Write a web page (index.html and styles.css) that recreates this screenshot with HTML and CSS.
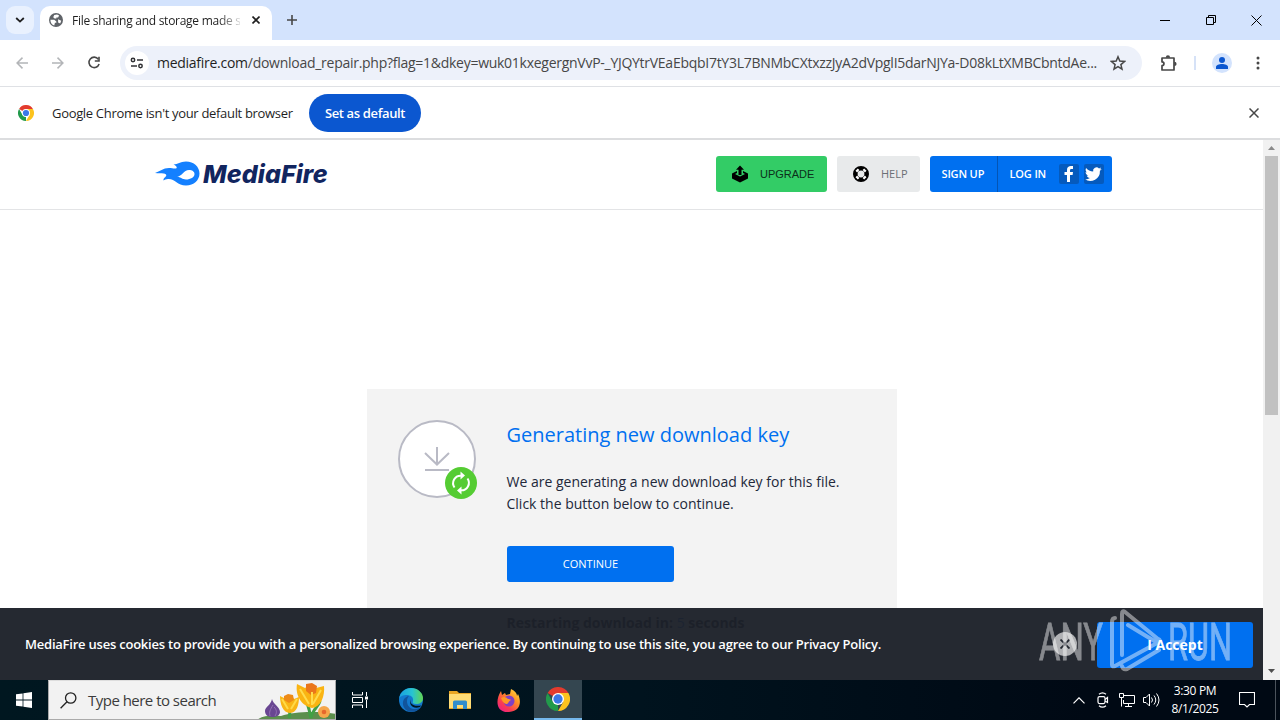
FILE: index.html
```html
<!DOCTYPE html>
<html lang="en">
<head>
    <meta charset="UTF-8">
    <title>File sharing and storage made simple</title>
    <link rel="stylesheet" href="styles.css">
</head>
<body>
    <div class="tabstrip">
        <button class="tab-search"><svg width="10" height="6" viewBox="0 0 10 6"><path d="M1.2 1L5 4.6 8.8 1" fill="none" stroke="#1f1f1f" stroke-width="1.8"/></svg></button>
        <div class="tab">
            <svg width="14" height="14" viewBox="2 2 20 20"><circle cx="12" cy="12" r="10" fill="#5f6368"/><path fill="#fff" d="M4 11.500h5.500l3 2.500v2h-2l-1 3.800C6 19 4 15.500 4 11.500zM9.500 5l4-1 3 1.500-1.500 3h-2.500V10H10L8 8zM15 11l4.500 2-1.500 4-3-1.500v-2z"/></svg>
            <span class="tab-title">File sharing and storage made s</span>
            <svg class="tab-close" width="8" height="8" viewBox="0 0 8 8"><path d="M.5.5l7 7m0-7l-7 7" stroke="#1f1f1f" stroke-width="1.600"/></svg>
        </div>
        <svg class="new-tab" width="10" height="10" viewBox="0 0 10 10"><path d="M5 0v10M0 5h10" stroke="#474747" stroke-width="1.600"/></svg>
        <div class="window-buttons">
            <svg width="10" height="10" viewBox="0 0 10 10"><path d="M0 5.500h10" stroke="#000"/></svg>
            <svg width="10" height="10" viewBox="0 0 10 10"><path d="M.5 2.500h7v7h-7zM2.500 2.500v-2h7v7h-2" fill="none" stroke="#000"/></svg>
            <svg width="11" height="11" viewBox="0 0 11 11"><path d="M.5.5l10 10m0-10l-10 10" stroke="#000"/></svg>
        </div>
    </div>

    <div class="toolbar">
        <svg class="nav-icon" width="12" height="12" viewBox="0 0 12 12"><path d="M6.500.6L1.100 6l5.400 5.400M1.100 6H12" fill="none" stroke="#b3b5b8" stroke-width="1.500"/></svg>
        <svg class="nav-icon" width="12" height="12" viewBox="0 0 12 12"><path d="M5.500.6L10.900 6l-5.400 5.400M10.900 6H0" fill="none" stroke="#b3b5b8" stroke-width="1.500"/></svg>
        <svg class="nav-icon" width="14" height="14" viewBox="0 0 14 14"><path d="M11.300 3.200A5.200 5.200 0 1 0 12.100 8" fill="none" stroke="#474747" stroke-width="1.600"/><path d="M12.800.8v5H7.800V4.200h3.400V.8z" fill="#474747"/></svg>
        <div class="omnibox">
            <span class="site-info"><svg width="14" height="12" viewBox="0 0 14 12"><g fill="none" stroke="#303134" stroke-width="1.500"><circle cx="3" cy="3" r="1.700"/><circle cx="10.500" cy="9" r="1.700"/><path d="M7 3h6M1 9h6"/></g></svg></span>
            <span class="url"><b>mediafire.com</b>/download_repair.php?flag=1&amp;dkey=wuk01kxegergnVvP-_YJQYtrVEaEbqbI7tY3L7BNMbCXtxzzJyA2dVpglI5darNJYa-D08kLtXMBCbntdAe...</span>
            <svg class="star" width="16" height="16" viewBox="0 0 16 16"><path d="M8 1.800l1.800 4.300 4.700.4-3.600 3.100 1.100 4.600L8 11.700l-4 2.500 1.100-4.600-3.600-3.100 4.700-.4z" fill="none" stroke="#474747" stroke-width="1.500"/></svg>
        </div>
        <svg class="extensions" width="18" height="18" viewBox="0 0 18 18"><path d="M2 4H14v4.200V16H2v-4.300c2.600-.2 2.600-3.600 0-3.800z" fill="none" stroke="#474747" stroke-width="1.700" stroke-linejoin="round"/><path d="M5.800 3.700a2.100 2.400 0 0 1 4.300 0zM14.300 7.800a2.300 2.100 0 0 1 0 4.200z" fill="#474747"/></svg>
        <span class="divider"></span>
        <span class="profile"><svg width="12" height="12" viewBox="0 0 12 12" fill="#0b57d0"><circle cx="6" cy="3" r="3"/><path d="M0 12V10c0-4 12-4 12 0v2z"/></svg></span>
        <svg class="menu-dots" width="4" height="14" viewBox="0 0 4 14" fill="#474747"><circle cx="2" cy="2" r="1.500"/><circle cx="2" cy="7" r="1.500"/><circle cx="2" cy="12" r="1.500"/></svg>
    </div>

    <div class="infobar">
        <svg width="16" height="16" viewBox="0 0 48 48"><use href="#chrome"/></svg>
        <span class="infobar-text">Google Chrome isn't your default browser</span>
        <button class="set-default">Set as default</button>
        <svg class="infobar-close" width="10" height="10" viewBox="0 0 10 10"><path d="M.5.5l9 9m0-9l-9 9" stroke="#474747" stroke-width="1.500"/></svg>
    </div>

    <div class="viewport">
        <div class="page">
            <div class="site-header">
                <a class="logo">
                    <svg width="46" height="26" viewBox="0 0 46 26"><path fill="#1480ff" fill-rule="evenodd" d="M0 12C5 10.500 8 7 14 7c3 0 5 .8 7.500.3C22.500 6 20.500 4.200 18.500 3.500 23 3.500 25 .5 31 .5c8 0 13.500 5.500 13.500 12S39 24.500 31 24.500c-9 0-11-7-18-6.500-2 0-3.500 1-4.500 1.500C8 16.500 12.500 15.500 11 13.500 9.500 11.500 5 12.500 0 12zM21.500 16.200C26 15.500 26.500 18.500 31 18.500c4.500 0 8.500-2.300 8.500-5.500 0-2.500-2.500-4-5.500-4-5.500 0-6.500 6-12.500 7.200z"/></svg>
                    <span>MediaFire</span>
                </a>
                <a class="btn upgrade">
                    <svg width="18" height="18" viewBox="0 0 18 18"><path d="M9 .5l4 4.300h-2.500V10h-3V4.800H5zM6 6L1 8.500v5l8 4 8-4v-5L12 6v2l2 1L9 11.500 4 9l2-1z"/></svg>
                    <span>UPGRADE</span>
                </a>
                <a class="btn help">
                    <svg width="18" height="18" viewBox="0 0 18 18"><circle cx="9" cy="9" r="5.700" fill="none" stroke="#000" stroke-width="4.600"/><path d="M4.300 6.600l2.300-2.300M11.400 4.300l2.300 2.300M13.700 11.400l-2.300 2.300M6.600 13.700l-2.300-2.300" stroke="#fff" stroke-width="2.200"/></svg>
                    <span>HELP</span>
                </a>
                <div class="account">
                    <a class="signup">SIGN UP</a>
                    <a class="login">LOG IN</a>
                    <span class="social"><svg width="20" height="20" viewBox="0 0 20 20"><path fill="#fff" d="M8 18v-7H5.500V8H8V6c0-3 1.700-4 4-4h2v3h-1.500C11.300 5 11 5.500 11 6.500V8h3l-.4 3H11v7z"/></svg></span>
                    <span class="social"><svg width="20" height="20" viewBox="1 0 24 24"><path fill="#fff" d="M22.200 5.900c-.8.300-1.600.6-2.400.7.900-.5 1.500-1.300 1.800-2.300-.8.500-1.700.8-2.600 1A4.100 4.100 0 0 0 12 9c-3.400-.2-6.400-1.800-8.500-4.300-1.100 2-.5 4.300 1.300 5.500-.7 0-1.300-.2-1.900-.5 0 2 1.400 3.700 3.300 4.100-.6.200-1.200.2-1.900.1.500 1.600 2 2.800 3.800 2.800A8.300 8.300 0 0 1 2 18.400 11.700 11.700 0 0 0 20.100 8c.8-.6 1.500-1.300 2.100-2.100z"/></svg></span>
                </div>
            </div>

            <div class="card">
                <svg class="card-icon" width="80" height="80" viewBox="0 0 80 80">
                    <circle cx="39" cy="39" r="38" fill="#fff" stroke="#b9bac5" stroke-width="2"/>
                    <path d="M39 27v17M27 33l12 11.500L51 33M27 50h24" fill="none" stroke="#b9bac5" stroke-width="2"/>
                    <circle cx="63" cy="63" r="16" fill="#5c3"/>
                    <path d="M56.500 67.500A7.500 7.500 0 0 1 63 55.700M69.500 58.500A7.500 7.500 0 0 1 63 70.300" fill="none" stroke="#fff" stroke-width="2"/>
                    <path d="M62.500 51.500l4.500 4-4.500 4zM63.500 66.500l-4.500 4 4.500 4z" fill="#fff"/>
                </svg>
                <div class="card-body">
                    <h1>Generating new download key</h1>
                    <p>We are generating a new download key for this file.<br>Click the button below to continue.</p>
                    <button class="continue">CONTINUE</button>
                    <div class="countdown">Restarting download in: <span>5</span> seconds</div>
                </div>
            </div>

            <div class="cookie-bar">
                <span class="cookie-text">MediaFire uses cookies to provide you with a personalized browsing experience. By continuing to use this site, you agree to our Privacy Policy.</span>
                <span class="cookie-close"><svg width="10" height="10" viewBox="0 0 10 10"><path d="M.5.5l9 9m0-9l-9 9" stroke="#22262f" stroke-width="1.800"/></svg></span>
                <button class="accept">I Accept</button>
            </div>
        </div>
        <div class="scrollbar">
            <svg width="7" height="4" viewBox="0 0 7 4"><path d="M0 4L3.500 0 7 4z" fill="#8a8a8a"/></svg>
            <div class="thumb"></div>
            <svg width="7" height="4" viewBox="0 0 7 4"><path d="M0 0l3.500 4L7 0z" fill="#505050"/></svg>
        </div>
    </div>

    <div class="taskbar">
        <div class="start"><svg width="16" height="16" viewBox="0 0 16 16" fill="#fff"><path d="M0 2.300l6.600-.9v6.200H0zM7.400 1.300L16 0v7.600H7.400zM0 8.400h6.600v6.200L0 13.700zM7.400 8.400H16V16l-8.600-1.300z"/></svg></div>
        <div class="search">
            <svg width="17" height="17" viewBox="0 0 17 17"><g fill="none" stroke="#222" stroke-width="1.300"><circle cx="10.700" cy="6" r="5.200"/><path d="M7 9.700L.6 16.200"/></g></svg>
            <span>Type here to search</span>
            <svg class="flowers" width="80" height="39" viewBox="0 0 80 39">
                <path d="M0 39c6-5 16-5 24-4 14-5 38-5 56-2v6z" fill="#5c8f4d"/>
                <path d="M32 37c2-8 0-9-4-13M54 37c-3-8 0-10-6-17M54 37c1-8 8-12 9-17" fill="none" stroke="#42a045" stroke-width="3"/>
                <path d="M15 18c1 5 8 8 8 13 0 3-3 5-8 5s-7-3-7-6c0-4 6-6 7-12z" fill="#694692"/><path d="M16 24c-3 5-4 7-3 11M17 26c3 3 3 6 1 9" fill="none" stroke="#9471b5"/>
                <path d="M23 15l6 3 4-4 4 4 5-2c0 7-2 16-9 16s-10-9-10-17z" fill="#f9b516"/>
                <path d="M27 15l4-2 5 1 1 5-5 3-5-3z" fill="#ed8a17"/><path d="M25 18l6 10M40 18l-6 10" stroke="#ffda48" stroke-width="2"/>
                <path d="M40 3l8 4 6-4 5 4 8-2c1 10-3 21-12 22C45 25 38 15 40 3z" fill="#fab413"/>
                <path d="M49 3l6-1 5 3-1 7-5 2-5-4z" fill="#ea761b"/><path d="M43 8l9 15M64 9l-8 14M55 11v13" stroke="#ffdc4d" stroke-width="2"/>
                <circle cx="67" cy="31" r="6" fill="#f5a64b"/><circle cx="67" cy="31" r="2.300" fill="#e5672c"/>
            </svg>
        </div>
        <div class="task"><svg width="17" height="16" viewBox="0 0 17 16"><path d="M.5 0v3h10V0M.5 16v-3h10v3M.5 5.500h10v5H.5zM14.500 0v4M14.500 8v8" fill="none" stroke="#fff"/><path d="M13 4.500h3v3h-3z" fill="#fff"/></svg></div>
        <div class="task edge">
            <svg width="26" height="26" viewBox="0 0 26 26">
                <defs><linearGradient id="edgeTop" x1="0" x2="1"><stop stop-color="#199fe0"/><stop offset=".55" stop-color="#27c3d3"/><stop offset="1" stop-color="#62d551"/></linearGradient></defs>
                <circle cx="13" cy="13" r="12" fill="#1379ce"/>
                <path d="M1 12C2 5 7 1 13 1c7 0 12 5 12 10 0 4-3 6-7 6-3 0-4-1-3-3 1-4-3-6-6-6-4 0-7 1-8 4z" fill="url(#edgeTop)"/>
                <path d="M11 9c-4 4-2 13 6 13 3 0 5-1 7-3-4 6-12 8-17 3C3 17 5 10 11 9z" fill="#11549c"/><path d="M13 12c-2 4 2 8 10 6.500l-1 1.500c-7 3-12-3-9-8z" fill="#001722"/>
            </svg>
        </div>
        <div class="task"><svg width="22" height="20" viewBox="0 0 22 20"><path d="M0 1h8l2 2h12v16H0z" fill="#e9a624"/><path d="M0 4h22v14H0z" fill="#ffdc75"/><path d="M4 19v-7q0-1.500 1.500-1.500h11q1.500 0 1.500 1.500v7h-4v-4H8v4z" fill="#318dcc"/></svg></div>
        <div class="task">
            <svg width="24" height="25" viewBox="0 0 24 25">
                <defs><linearGradient id="foxFire" x1="1" x2=".2" y2="1"><stop stop-color="#ffe546"/><stop offset=".4" stop-color="#ff9425"/><stop offset=".75" stop-color="#fa3d50"/><stop offset="1" stop-color="#ed2085"/></linearGradient></defs>
                <path d="M4 3l1 4 3-2 1 2 4-1 1-5c4 2 6 4 6 7l1-2c3 6 4 17-9 18C-1 25-2 12 4 3z" fill="url(#foxFire)"/>
                <circle cx="12" cy="13" r="5.500" fill="#8040c5"/><path d="M4 10c3-2 5-1 7 1 2 0 3 1 3 1-3 1-2 4-5 4-3-1-4-4-5-6z" fill="#ff9824"/>
            </svg>
        </div>
        <div class="task active">
            <svg width="24" height="24" viewBox="0 0 48 48">
                <g id="chrome">
                    <path d="M24 24L3.200 12A24 24 0 0 1 44.800 12z" fill="#e33b2e"/>
                    <path d="M24 24V48A24 24 0 0 1 3.200 12L13.600 30z" fill="#229a4b"/>
                    <path d="M24 12H44.800A24 24 0 0 1 24 48L34.400 30z" fill="#fcc31e"/>
                    <circle cx="24" cy="24" r="12" fill="#fff"/><circle cx="24" cy="24" r="9.300" fill="#3b78e7"/>
                </g>
            </svg>
        </div>
        <div class="tray">
            <svg width="12" height="7" viewBox="0 0 12 7"><path d="M.5 6.300L6 .8l5.500 5.500" fill="none" stroke="#fff" stroke-width="1.200"/></svg>
            <svg width="12" height="16" viewBox="0 0 12 16"><g fill="none" stroke="#fff" stroke-width="1.200"><rect x="1" y="4.600" width="7" height="7" rx="1.500"/><path d="M8 7.500l2.500-2v5L8 8.900M2 2.300q3.500-2.800 7 0M2 13.800q3.500 2.800 7 0"/></g></svg>
            <svg width="16" height="14" viewBox="0 0 16 14"><g fill="none" stroke="#fff"><path d="M5 2.500h10.500v8H4.500V7M9.500 10.500v3M6 13.500h7M.5.500h4v4h-4zM2.500 4.500v9"/></g></svg>
            <svg width="17" height="14" viewBox="0 0 17 14"><g fill="none" stroke="#fff"><path d="M.5 4.500h2.500L6.500 1v12L3 9.500H.5zM8.500 4.500q2 2.500 0 5M11 2.500q3.500 4.500 0 9M13.500.500q5 6.500 0 13"/></g></svg>
        </div>
        <div class="clock"><span>3:30 PM</span><span>8/1/2025</span></div>
        <svg class="notify" width="16" height="16" viewBox="0 0 16 16"><path d="M.5.500h15v12h-5L8 15l-2.500-2.500h-5z" fill="none" stroke="#fff" stroke-width="1.100"/></svg>
        <span class="show-desktop"></span>
    </div>

    <svg class="watermark" width="194" height="64" viewBox="0 0 194 64">
        <g fill="#fff" stroke="#fff" stroke-width=".8">
            <text x="0" y="50.500" textLength="64" lengthAdjust="spacingAndGlyphs">ANY</text>
            <text x="129" y="50.500" textLength="64" lengthAdjust="spacingAndGlyphs">RUN</text>
        </g>
        <g fill="none" stroke="#fff" stroke-width="4" stroke-linejoin="round" stroke-linecap="round">
            <path d="M76 9q-3 0-3 4v43q0 2 3 1l44-24q2-2-1-3L86 3q-3-2-3 2v41M89 16l28 17M83 57q1 4 5 3l32-19"/>
        </g>
    </svg>
</body>
</html>
```
FILE: styles.css
```css
* {
    box-sizing: border-box;
}

body {
    margin: 0;
    width: 1280px;
    height: 720px;
    overflow: hidden;
    position: relative;
    display: flex;
    flex-direction: column;
    font-family: "Open Sans", sans-serif;
    background: #fff;
}

svg {
    display: block;
    flex-shrink: 0;
}

button {
    border: 0;
    padding: 0;
    font-family: inherit;
}

.tabstrip {
    height: 40px;
    flex-shrink: 0;
    display: flex;
    align-items: center;
    background: #d3e3fd;
    padding: 0 18px 0 6px;
}

.tab-search {
    width: 28px;
    height: 28px;
    border-radius: 9px;
    background: #e9f1fe;
    display: flex;
    align-items: center;
    justify-content: center;
}

.tab {
    width: 232px;
    height: 34px;
    margin: 6px 0 0 6px;
    padding: 0 12px 6px 9px;
    border-radius: 10px 10px 0 0;
    background: #fff;
    display: flex;
    align-items: center;
}

.tab-title {
    width: 168px;
    margin: 1px 0 0 9px;
    white-space: nowrap;
    font-size: 12px;
    letter-spacing: -0.27px;
    color: #1f1f1f;
    -webkit-mask-image: linear-gradient(to right, #000 146px, transparent 172px);
}

.tab-close {
    margin-left: 12px;
}

.new-tab {
    margin-left: 15px;
}

.window-buttons {
    margin-left: auto;
    display: flex;
    align-items: center;
    gap: 36px;
}

.window-buttons svg:last-child {
    margin-left: -1px;
}

.toolbar {
    height: 47px;
    flex-shrink: 0;
    display: flex;
    align-items: center;
    padding-left: 16px;
    background: #fff;
    border-bottom: 1px solid #dfe1e5;
}

.nav-icon {
    margin-right: 24px;
}

.nav-icon + .nav-icon + .nav-icon {
    margin: 0 19px 0 -1px;
}

.omnibox {
    width: 1022px;
    height: 34px;
    border-radius: 17px;
    background: #edf1fa;
    display: flex;
    align-items: center;
    padding: 0 16px 0 5px;
}

.site-info {
    width: 24px;
    height: 24px;
    border-radius: 50%;
    background: #fff;
    display: flex;
    align-items: center;
    justify-content: center;
}

.url {
    margin: -2px 0 0 8px;
    font-size: 14px;
    letter-spacing: -0.27px;
    white-space: nowrap;
    color: #474747;
}

.url b {
    font-weight: 400;
    color: #1f1f1f;
}

.star {
    margin-left: auto;
}

.extensions {
    margin-left: 18px;
}

.divider {
    width: 2px;
    height: 14px;
    margin: 0 16px;
    background: #d6e2f7;
}

.profile {
    width: 20px;
    height: 20px;
    border-radius: 50%;
    background: #d3e3fd;
    display: flex;
    align-items: center;
    justify-content: center;
}

.menu-dots {
    margin-left: 24px;
}

.infobar {
    height: 53px;
    flex-shrink: 0;
    display: flex;
    align-items: center;
    padding: 0 21px 0 18px;
    border-bottom: 2px solid #dcdddf;
}

.infobar-text {
    width: 257px;
    padding-left: 18px;
    font-size: 13px;
    letter-spacing: -0.32px;
    white-space: nowrap;
    color: #1f1f1f;
}

.set-default {
    width: 112px;
    height: 38px;
    margin-left: 18px;
    border-radius: 19px;
    background: #0b57d0;
    color: #fff;
    font-size: 13px;
    font-weight: 600;
    letter-spacing: -0.36px;
}

.infobar-close {
    margin-left: auto;
}

.viewport {
    height: 540px;
    flex-shrink: 0;
    display: flex;
}

.page {
    width: 1263px;
    position: relative;
    overflow: hidden;
}

.site-header {
    height: 70px;
    display: flex;
    align-items: flex-start;
    padding: 16px 151px 0 155px;
    border-bottom: 1px solid #e3e4e6;
}

.logo {
    display: flex;
    align-items: center;
    height: 36px;
    gap: 2px;
    margin-right: auto;
    font-family: Inter, sans-serif;
    font-size: 25px;
    font-weight: 800;
    font-style: italic;
    letter-spacing: 0.1px;
    color: #11255f;
}

.btn {
    height: 36px;
    border-radius: 3px;
    margin-right: 10px;
    display: flex;
    align-items: center;
}

.upgrade {
    width: 111px;
    padding-left: 15px;
    gap: 11px;
    background: #3c6;
    color: #0c301a;
    font-family: "Liberation Sans", sans-serif;
    font-size: 11px;
}

.help {
    width: 83px;
    padding-left: 15px;
    gap: 11px;
    background: #e8eaeb;
    color: #6b6f75;
    font-size: 11px;
}

.help span {
    margin-top: -1px;
}

.account {
    width: 182px;
    height: 36px;
    border-radius: 3px;
    background: #0070f0;
    display: flex;
    align-items: center;
    color: #fff;
    font-size: 11px;
    font-weight: 600;
    letter-spacing: -0.15px;
}

.signup,
.login {
    line-height: 36px;
    white-space: nowrap;
}

.signup {
    width: 68px;
    padding-left: 11.5px;
    border-right: 1px solid #0455b5;
}

.login {
    width: 61px;
    padding-left: 11.5px;
}

.social {
    width: 20px;
    height: 20px;
    margin-right: 5px;
    border-radius: 2px;
    background: #055abd;
}

.card {
    width: 530px;
    height: 300px;
    margin: 179px 0 0 367px;
    padding: 31px;
    background: #f3f3f3;
    display: flex;
    color: #22283a;
}

.card-body {
    margin-left: 28.5px;
}

.card h1 {
    margin: 0;
    font-size: 20px;
    font-weight: 400;
    line-height: 30px;
    color: #0070f0;
}

.card p {
    margin: 21px 0 31px;
    font-size: 14px;
    line-height: 22px;
}

.continue {
    display: block;
    width: 167px;
    height: 36px;
    margin-left: 0.5px;
    padding-bottom: 2px;
    border-radius: 3px;
    background: #0070f0;
    color: #fff;
    font-size: 11px;
}

.countdown {
    margin-top: 31px;
    font-size: 14px;
    font-weight: 700;
    line-height: 20px;
}

.countdown span {
    color: #1d6fe8;
    font-weight: 400;
}

.cookie-bar {
    position: absolute;
    left: 0;
    right: 0;
    bottom: 0;
    height: 72px;
    padding: 0 10px 0 25px;
    display: flex;
    align-items: center;
    background: rgba(28, 32, 41, 0.96);
    color: #fff;
}

.cookie-text {
    font-size: 13px;
    font-weight: 600;
    letter-spacing: -0.223px;
    white-space: nowrap;
}

.cookie-close {
    width: 24px;
    height: 24px;
    margin-left: auto;
    border-radius: 50%;
    background: #b0b1b4;
    display: flex;
    align-items: center;
    justify-content: center;
}

.accept {
    width: 156px;
    height: 46px;
    margin: 1px 0 0 20px;
    border-radius: 3px;
    background: #0070f0;
    color: #fff;
    font-size: 14px;
    font-weight: 700;
}

.scrollbar {
    width: 17px;
    background: #f1f1f1;
    display: flex;
    flex-direction: column;
    align-items: center;
    padding: 6px 0 7px;
}

.thumb {
    width: 13px;
    height: 259px;
    margin: 6px 0 auto;
    background: #c1c1c1;
}

.taskbar {
    height: 40px;
    display: flex;
    align-items: center;
    background: linear-gradient(to right, #001720, #00131e 50%, #000914 85%);
    color: #fff;
}

.start {
    width: 48px;
    display: flex;
    justify-content: center;
}

.search {
    width: 288px;
    height: 40px;
    padding-left: 11px;
    overflow: hidden;
    display: flex;
    align-items: center;
    gap: 11px;
    background: #f2f2f2;
    border: 1px solid #aaa;
    border-top-color: #ddd;
    color: #3b3b3b;
    font-size: 15px;
    letter-spacing: -0.52px;
    white-space: nowrap;
}

.flowers {
    margin: 0 -2px 0 auto;
}

.task {
    width: 49px;
    height: 40px;
    display: flex;
    align-items: center;
    justify-content: center;
}

.task.edge {
    margin-left: 1px;
}

.task.active {
    margin-left: 1px;
    width: 48px;
    background: #344650;
    border-bottom: 2px solid #76b9ed;
}

.tray {
    margin-left: auto;
    display: grid;
    grid-template-columns: repeat(4, 24px);
    justify-items: center;
    align-items: center;
}

.clock {
    width: 64px;
    display: flex;
    flex-direction: column;
    align-items: center;
    font-size: 12px;
    line-height: 18px;
    letter-spacing: -0.35px;
}

.notify {
    margin-left: 12px;
}

.show-desktop {
    width: 1px;
    height: 40px;
    margin: 0 4px 0 20px;
    background: #4b535c;
}

/* translucent mark that lies over the page corner */
.watermark {
    position: absolute;
    left: 1039px;
    top: 609px;
    overflow: visible;
    opacity: 0.45;
    font-family: Roboto, sans-serif;
    font-size: 51px;
    font-weight: 400;
}
```
